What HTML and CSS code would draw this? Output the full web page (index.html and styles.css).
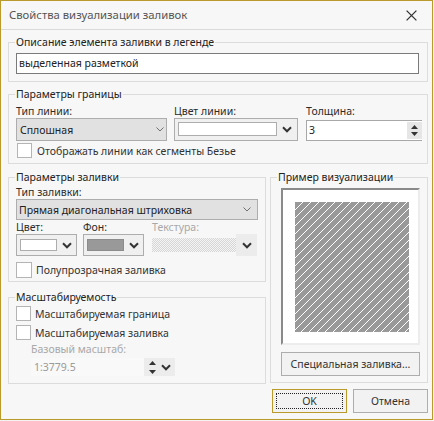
FILE: index.html
```html
<!DOCTYPE html>
<html lang="ru">
<head>
<meta charset="utf-8">
<title>Свойства визуализации заливок</title>
<link rel="stylesheet" href="styles.css">
</head>
<body>
<div class="window">
  <div class="titlebar">
    <span class="title">Свойства визуализации заливок</span>
    <svg class="close" width="11" height="11" viewBox="0 0 11 11"><path d="M0.6 0.6L10.4 10.4M10.4 0.6L0.6 10.4" stroke="#333" stroke-width="1.3" fill="none"/></svg>
  </div>
  <div class="content">
    <section class="grp g1">
      <div class="legend">Описание элемента заливки в легенде</div>
      <div class="textbox">выделенная разметкой</div>
    </section>

    <section class="grp g2">
      <div class="legend">Параметры границы</div>
      <div class="row">
        <div class="c-type">
          <div class="lbl">Тип линии:</div>
          <div class="select sel1"><span>Сплошная</span>
            <svg width="8" height="5" viewBox="0 0 8 5"><path d="M0.5 0.5L4 4L7.5 0.5" stroke="#707070" fill="none"/></svg>
          </div>
        </div>
        <div class="c-color">
          <div class="lbl">Цвет линии:</div>
          <div class="combo combo-wide">
            <span class="swatch sw-wide"></span>
            <span class="drop"><svg width="10" height="7" viewBox="0 0 10 7"><path d="M1 1.3L5 5.3L9 1.3" stroke="#333" stroke-width="2" fill="none"/></svg></span>
          </div>
        </div>
        <div class="c-width">
          <div class="lbl">Толщина:</div>
          <div class="spin">
            <span class="val">3</span>
            <span class="spinbtn">
              <svg width="7" height="4" viewBox="0 0 7 4"><path d="M3.5 0L7 4H0Z" fill="#333"/></svg>
              <svg width="7" height="4" viewBox="0 0 7 4"><path d="M0 0H7L3.5 4Z" fill="#333"/></svg>
            </span>
          </div>
        </div>
      </div>
      <div class="check ch-bezier"><span class="box"></span><span>Отображать линии как сегменты Безье</span></div>
    </section>

    <div class="lower">
      <div class="leftcol">
        <section class="grp g3">
          <div class="legend">Параметры заливки</div>
          <div class="lbl l-type">Тип заливки:</div>
          <div class="select sel2"><span>Прямая диагональная штриховка</span>
            <svg width="8" height="5" viewBox="0 0 8 5"><path d="M0.5 0.5L4 4L7.5 0.5" stroke="#707070" fill="none"/></svg>
          </div>
          <div class="crow">
            <div class="cc1">
              <div class="lbl">Цвет:</div>
              <div class="combo combo-small">
                <span class="swatch sw-small"></span>
                <span class="drop"><svg width="10" height="7" viewBox="0 0 10 7"><path d="M1 1.3L5 5.3L9 1.3" stroke="#333" stroke-width="2" fill="none"/></svg></span>
              </div>
            </div>
            <div class="cc2">
              <div class="lbl">Фон:</div>
              <div class="combo combo-small">
                <span class="swatch sw-small sw-gray"></span>
                <span class="drop"><svg width="10" height="7" viewBox="0 0 10 7"><path d="M1 1.3L5 5.3L9 1.3" stroke="#333" stroke-width="2" fill="none"/></svg></span>
              </div>
            </div>
            <div class="cc3">
              <div class="lbl disabled">Текстура:</div>
              <div class="texture">
                <span class="tex-swatch"></span>
                <span class="tex-drop"><svg width="10" height="7" viewBox="0 0 10 7"><path d="M1 1.3L5 5.3L9 1.3" stroke="#333" stroke-width="2" fill="none"/></svg></span>
              </div>
            </div>
          </div>
          <div class="check ch-semi"><span class="box"></span><span>Полупрозрачная заливка</span></div>
        </section>

        <section class="grp g4">
          <div class="legend">Масштабируемость</div>
          <div class="check ch-s1"><span class="box"></span><span>Масштабируемая граница</span></div>
          <div class="check ch-s2"><span class="box"></span><span>Масштабируемая заливка</span></div>
          <div class="lbl disabled indent">Базовый масштаб:</div>
          <div class="scale">
            <span class="scale-val">1:3779.5</span>
            <span class="scale-btns">
              <span class="updown">
                <svg width="7" height="4" viewBox="0 0 7 4"><path d="M3.5 0L7 4H0Z" fill="#333"/></svg>
                <svg width="7" height="4" viewBox="0 0 7 4"><path d="M0 0H7L3.5 4Z" fill="#333"/></svg>
              </span>
              <svg width="10" height="7" viewBox="0 0 10 7"><path d="M1 1.3L5 5.3L9 1.3" stroke="#333" stroke-width="2" fill="none"/></svg>
            </span>
          </div>
        </section>
      </div>

      <div class="rightcol">
        <section class="grp g5">
          <div class="legend">Пример визуализации</div>
          <div class="preview">
            <svg class="hatch" width="114" height="130" viewBox="0 0 114 130" shape-rendering="crispEdges">
              <defs>
                <pattern id="hp" width="8" height="8" patternUnits="userSpaceOnUse">
                  <rect width="8" height="8" fill="#999"/>
                  <path d="M7 0h1v1h-1zM6 1h1v1h-1zM5 2h1v1h-1zM4 3h1v1h-1zM3 4h1v1h-1zM2 5h1v1h-1zM1 6h1v1h-1zM0 7h1v1h-1z" fill="#fff"/>
                </pattern>
              </defs>
              <rect width="114" height="130" fill="url(#hp)"/>
            </svg>
          </div>
          <div class="btn btn-special">Специальная заливка...</div>
        </section>
        <div class="buttons">
          <div class="btn btn-ok">OK</div>
          <div class="btn btn-cancel">Отмена</div>
        </div>
      </div>
    </div>
  </div>
</div>
</body>
</html>
```

FILE: styles.css
```css
* { box-sizing: border-box; }
html, body { margin: 0; padding: 0; background: #f3f3f3; }
body {
  width: 434px;
  height: 421px;
  overflow: hidden;
  font-family: "Noto Sans", "Open Sans", sans-serif;
  font-size: 10.5px;
  color: #2b2b2b;
}
.window {
  width: 433px;
  height: 420px;
  border: 1px solid #bb9a2c;
  background: #f7f7f7;
}
.titlebar {
  height: 29px;
  border-bottom: 1px solid #dadada;
  display: flex;
  align-items: center;
  justify-content: space-between;
  padding: 0 15px 0 8px;
}
.title { font-size: 11.3px; line-height: 16px; color: #555; }
.close { display: block; }

.content { padding: 0 4px 0 7px; }

.grp {
  border: 1px solid #dcdcdc;
  padding: 0 7px;
}
.legend {
  width: fit-content;
  margin: -8px 0 0 -1px;
  padding: 0 1px;
  line-height: 14px;
  height: 14px;
  background: #f7f7f7;
  color: #222;
  white-space: nowrap;
}
.lbl { line-height: 14px; height: 14px; white-space: nowrap; }
.disabled { color: #a8a8a8; }

/* group 1 */
.g1 { margin-top: 12px; padding: 0 8px 7px 7px; }
.textbox {
  margin-top: 4px;
  height: 21px;
  border: 1px solid #7a7a7a;
  background: #fff;
  padding: 0 2px;
  line-height: 19px;
  color: #222;
}

/* group 2 */
.g2 { margin-top: 12px; padding: 0 5px 5px 7px; }
.row { display: flex; margin-top: 3px; }
.c-type { width: 151px; }
.c-color { width: 124px; margin-left: 7px; }
.c-width { width: 116px; margin-left: 8px; }

.select {
  border: 1px solid #adadad;
  background: #e1e1e1;
  display: flex;
  align-items: center;
  justify-content: space-between;
  white-space: nowrap;
  color: #222;
}
.select svg { display: block; }
.sel1 { height: 23px; padding: 0 2px 0 3px; }
.sel2 { height: 21px; padding: 0 6px 0 2px; }

.combo {
  border: 1px solid #adadad;
  background: #f0f0f0;
  display: flex;
  align-items: flex-start;
}
.swatch { display: block; border: 1px solid #adadad; background: #fff; }
.drop { flex: 1; align-self: stretch; display: flex; align-items: center; justify-content: center; }
.drop svg { display: block; }
.combo-wide { height: 23px; }
.sw-wide { width: 99px; height: 14px; margin: 3px 0 0 3px; }
.combo-small { height: 22px; }
.sw-small { width: 37px; height: 12px; margin: 4px 0 0 3px; }
.sw-gray { background: #999; border-color: #8c8c8c; }

.spin {
  height: 21px;
  margin-top: 2px;
  border: 1px solid #a8a8a8;
  border-right: none;
  background: #fff;
  display: flex;
}
.val { flex: 1; padding-left: 2px; line-height: 19px; color: #222; }
.spinbtn {
  width: 15px;
  margin: 1px 0;
  background: #e6e6e6;
  display: flex;
  flex-direction: column;
  align-items: center;
  justify-content: space-around;
  padding: 2px 0;
}
.spinbtn svg { display: block; }

.check { display: flex; align-items: center; height: 15px; color: #333; white-space: nowrap; }
.box { display: block; flex: none; width: 15px; height: 15px; border: 1px solid #b4b4b4; background: #fff; margin-right: 4px; }
.ch-bezier { margin-top: 2px; }
.ch-bezier .box { margin-left: 1px; margin-right: 5px; }

/* lower area */
.lower { display: flex; margin-top: 13px; }
.leftcol { width: 258px; }
.rightcol { width: 158px; margin-left: 4px; }

/* group 3 */
.g3 { padding-bottom: 3px; }
.l-type { margin-top: 1px; }
.crow { display: flex; }
.cc1 { width: 61px; }
.cc2 { width: 61px; margin-left: 6px; }
.cc3 { width: 105px; margin-left: 8px; }
.texture { height: 22px; display: flex; }
.tex-swatch {
  width: 84px;
  margin: 4px 0;
  background: repeating-conic-gradient(#d6d6d6 0 25%, #f4f4f4 0 50%) 0 0 / 2px 2px;
}
.tex-drop { flex: 1; background: #ececec; display: flex; align-items: center; justify-content: center; }
.tex-drop svg { display: block; }
.ch-semi { margin-top: 6px; height: 16px; }
.ch-semi .box { width: 16px; height: 16px; }

/* group 4 */
.g4 { margin-top: 15px; padding-bottom: 7px; }
.ch-s1 { margin-top: 2px; }
.ch-s2 { margin-top: 4px; }
.indent { margin-left: 15px; }
.lbl.indent { margin-top: 2px; }
.scale {
  margin: 2px 0 0 15px;
  width: 144px;
  height: 18px;
  display: flex;
  background: #f9f9f9;
}
.scale-val { flex: 1; padding-left: 3px; line-height: 18px; color: #9a9a9a; }
.scale-btns {
  width: 31px;
  background: #ececec;
  display: flex;
  align-items: center;
  justify-content: space-around;
  padding: 0 2px;
}
.scale-btns svg { display: block; }
.updown { display: flex; flex-direction: column; gap: 5px; }

/* group 5 */
.g5 { padding-bottom: 6px; }
.preview {
  margin: 4px 0 0 3px;
  width: 139px;
  height: 157px;
  border: 2px solid;
  border-color: #8a8a8a #ececec #ececec #8a8a8a;
  background: #fff;
  padding: 12px 9px 11px 12px;
}
.hatch { display: block; }

.btn {
  height: 24px;
  border: 1px solid #adadad;
  background: #f2f2f2;
  display: flex;
  align-items: center;
  justify-content: center;
  color: #333;
  white-space: nowrap;
}
.btn-special { margin: 7px 0 0 3px; width: 139px; }
.buttons { display: flex; margin-top: 6px; padding-left: 2px; }
.buttons .btn { width: 75px; }
.btn-ok { border-color: #bb9a2c; outline: 1px dotted #222; outline-offset: -5px; }
.btn-cancel { margin-left: 6px; }
```
